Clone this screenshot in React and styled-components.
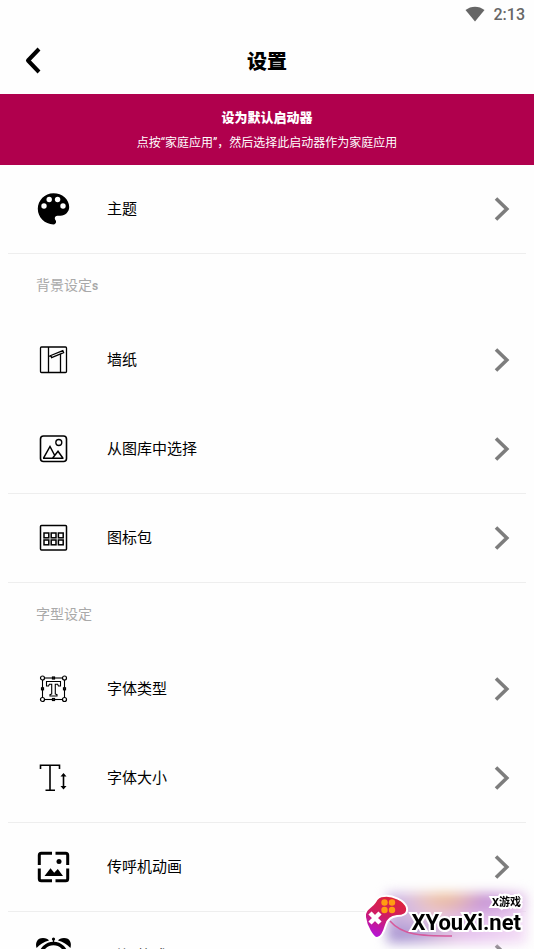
import React from 'react';
import styled, { createGlobalStyle } from 'styled-components';

const GlobalStyle = createGlobalStyle`
	* {
		box-sizing: border-box;
	}

	body {
		margin: 0;
		background: #fefefe;
		color: #000;
		font-family: Roboto, 'Noto Sans CJK SC', sans-serif;
	}
`;

const Screen = styled.div`
	display: flex;
	flex-direction: column;
	height: 100vh;
	overflow: hidden;
`;

const StatusBar = styled.div`
	display: flex;
	flex: none;
	align-items: center;
	justify-content: flex-end;
	gap: 8px;
	height: 28px;
	padding: 0 9px;
	color: #666;
	font-size: 16px;
	font-weight: 500;
	line-height: 28px;

	svg {
		margin-right: 1px;
	}

	span {
		padding-top: 2px;
	}
`;

const Header = styled.header`
	display: grid;
	flex: none;
	grid-template-columns: 48px 1fr 48px;
	align-items: center;
	height: 66px;
	padding: 0 10px;

	h1 {
		margin: 0;
		padding-top: 2px;
		font-size: 20px;
		font-weight: 900;
		line-height: 28px;
		text-align: center;
	}
`;

const BackButton = styled.button`
	display: flex;
	align-items: center;
	justify-content: center;
	height: 48px;
	padding: 0;
	border: 0;
	background: none;
	color: #000;
`;

const Banner = styled.button`
	display: flex;
	flex: none;
	flex-direction: column;
	align-items: center;
	justify-content: flex-start;
	gap: 5px;
	width: 100%;
	height: 71px;
	padding: 14px 16px 12px;
	border: 0;
	background: #b0004d;
	color: #fff;
	font-family: inherit;
	font-size: 12px;
	line-height: 20px;

	strong {
		font-size: 13px;
		font-weight: 900;
	}
`;

const List = styled.main`
	flex: 1;
	min-height: 0;
	padding: 0 8px;
	overflow-y: auto;
	scrollbar-width: none;
`;

const SectionTitle = styled.h2`
	height: 62px;
	margin: 0;
	padding: 0 28px;
	color: #a9a9a9;
	font-size: 14px;
	font-weight: 400;
	line-height: 62px;

	b {
		font-size: 12px;
	}
`;

const Row = styled.button`
	display: grid;
	grid-template-columns: 34px 1fr 16px;
	align-items: center;
	column-gap: 37px;
	width: 100%;
	height: 89px;
	padding: 0 16px 0 28px;
	border: 0;
	border-bottom: 1px solid ${(props) => (props.$divider ? '#eee' : 'transparent')};
	background: none;
	color: #000;
	font-family: inherit;
	font-size: 15px;
	line-height: 24px;
	text-align: left;

	svg {
		overflow: visible;
	}
`;

const Watermark = styled.div`
	position: fixed;
	right: 8px;
	bottom: 4px;
	display: flex;
	align-items: center;
	justify-content: space-between;
	width: 163px;
	height: 56px;
`;

const Glow = styled.div`
	position: absolute;
	inset: 4px 0 2px 24px;
	background:
		radial-gradient(ellipse at 42% 0, #eebd8c, transparent 35%),
		radial-gradient(ellipse at 70% 10%, #c08ad0, transparent 40%),
		radial-gradient(ellipse at 10% 90%, #a593d0, transparent 35%),
		linear-gradient(90deg, #c9b3e0, #e8c6e0 35%, #e6c4ee 60%, #f3dcf5);
	filter: blur(6px);
`;

const Gamepad = styled.svg`
	position: relative;
	flex: none;
	overflow: visible;
`;

const WatermarkText = styled.div`
	position: relative;
	display: flex;
	flex-direction: column;
	align-items: flex-end;
	padding: 0 5px 4px 0;
	font-weight: 700;
	white-space: nowrap;
	paint-order: stroke fill;
	-webkit-text-stroke: 4px #fff;

	small {
		font-size: 11px;
		line-height: 16px;
	}

	span {
		font-size: 22px;
		line-height: 24px;
	}
`;

const WifiIcon = () => (
	<svg width="20" height="16" viewBox="0 0 20 16">
		<path d="M10 15.5 0.5 4C6 -0.5 14 -0.5 19.5 4Z" fill="currentColor" />
	</svg>
);

const BackIcon = () => (
	<svg width="20" height="28" viewBox="0 0 20 28" fill="none" stroke="currentColor" strokeWidth="4">
		<path d="M15 2 4 13.5l11 11.5" strokeLinejoin="round" />
	</svg>
);

const ChevronIcon = () => (
	<svg width="16" height="24" viewBox="0 0 16 24" fill="none" stroke="#7d7d7d" strokeWidth="3.6">
		<path d="M2 1.5 12.8 12 2 22.5" />
	</svg>
);

const RowIcon = ({ children }) => (
	<svg width="34" height="34" viewBox="0 0 34 34" fill="none" stroke="currentColor" strokeWidth="1.3">
		{children}
	</svg>
);

const PaletteIcon = () => (
	<RowIcon>
		<path
			d="M17.5 1.2C8.8 1.2 1.8 8.2 1.8 16.8s7 15.6 15.7 15.6c1.5 0 2.6-1.1 2.6-2.6 0-.7-.3-1.3-.7-1.8-.4-.4-.6-1-.6-1.7 0-1.5 1.1-2.6 2.6-2.6h3.1c4.8 0 8.7-3.9 8.7-8.7C33.2 7.4 26.2 1.2 17.5 1.2Z"
			fill="#000"
			stroke="none"
		/>
		<g fill="#fff" stroke="none">
			<circle cx="8" cy="14" r="2.7" />
			<circle cx="13.2" cy="7.5" r="2.7" />
			<circle cx="21.6" cy="7.5" r="2.7" />
			<circle cx="27" cy="14" r="2.7" />
		</g>
	</RowIcon>
);

const WallpaperIcon = () => (
	<RowIcon>
		<rect x="4.5" y="4" width="26" height="25.5" rx="1" />
		<path d="M12.5 4v25.5M24.5 11v18.5" />
		<path d="M12.5 13.2h3M14.8 12.5l12-4.8.8 2-12 4.9Z" />
	</RowIcon>
);

const GalleryIcon = () => (
	<RowIcon>
		<rect x="4.5" y="4" width="26" height="25.5" rx="3" strokeWidth="1.6" />
		<circle cx="22.8" cy="10.5" r="3" />
		<path d="M7.5 26.2 14 14.5l5 9.5M16.5 26.2l5.5-7 5 7M7 26.2h20.5" strokeWidth="1.5" />
	</RowIcon>
);

const IconPackIcon = () => (
	<RowIcon>
		<rect x="4.5" y="4.5" width="26" height="24.5" rx="1" strokeWidth="1.5" />
		{[12, 19].map((y) =>
			[8, 15.2, 22.4].map((x) => (
				<rect key={`${x}-${y}`} x={x} y={y} width="4.8" height="4.8" strokeWidth="1.5" />
			))
		)}
	</RowIcon>
);

const FontTypeIcon = () => (
	<RowIcon>
		<rect x="6.5" y="6" width="22" height="21.5" strokeWidth="1.1" />
		<path
			d="M10.5 9.5h14v4.5h-2l-.9-1.8h-2.3v9.8l1.7.7v1.3h-7v-1.3l1.7-.7v-9.8h-2.3l-.9 1.8h-2Z"
			strokeWidth="1.1"
		/>
		<g fill="#fff" strokeWidth="1.2">
			<circle cx="6.5" cy="6" r="2" />
			<circle cx="28.5" cy="6" r="2" />
			<circle cx="6.5" cy="27.5" r="2" />
			<circle cx="28.5" cy="27.5" r="2" />
			<rect x="16.5" y="5" width="2" height="2" />
			<rect x="16.5" y="26.5" width="2" height="2" />
			<rect x="5.5" y="15.8" width="2" height="2" />
			<rect x="27.5" y="15.8" width="2" height="2" />
		</g>
	</RowIcon>
);

const FontSizeIcon = () => (
	<RowIcon>
		<path d="M4.5 8V4.3h19V8M14 4.3v25M9.5 29.3H19" strokeWidth="1.6" />
		<path d="M27.5 14v12.5" strokeWidth="1.6" />
		<path d="m24.5 15.5 3-3.6 3 3.6ZM24.5 25l3 3.6 3-3.6Z" fill="#000" stroke="none" />
	</RowIcon>
);

const PagerIcon = () => (
	<RowIcon>
		<path
			d="M3.3 15V5.3a2 2 0 0 1 2-2H16M19.5 3.3h10.2a2 2 0 0 1 2 2V15M31.7 18.5v10.2a2 2 0 0 1-2 2H19.5M16 30.7H5.3a2 2 0 0 1-2-2V18.5"
			strokeWidth="3"
		/>
		<path d="m8.5 26 6-7.8 3.7 4.6 3.6-3.7 5.2 6.9Z" fill="#000" stroke="none" />
		<circle cx="23" cy="11.5" r="2.5" fill="#000" stroke="none" />
	</RowIcon>
);

const AlarmIcon = () => (
	<RowIcon>
		<path
			d="M.6 9C-1 4 1-1 7-1c3 0 5 1 6 2.500C7.500 3 4 5.500.600 9ZM34.400 9C36 4 34-1 28-1c-3 0-5 1-6 2.500C27.500 3 31 5.500 34.400 9Z"
			fill="#000"
			stroke="none"
		/>
		<circle cx="17.5" cy="17.5" r="13" strokeWidth="3.5" />
		<path d="M17.5 10v8l5 3" strokeWidth="2" />
		<circle cx="17.5" cy="0" r="1.6" fill="#000" stroke="none" />
		<path d="M17.5 0v5" />
	</RowIcon>
);

const SettingRow = ({ icon: Icon, label, divider }) => (
	<Row type="button" $divider={divider}>
		<Icon />
		<span>{label}</span>
		<ChevronIcon />
	</Row>
);

const App = () => {
	return (
		<Screen>
			<GlobalStyle />
			<StatusBar>
				<WifiIcon />
				<span>2:13</span>
			</StatusBar>
			<Header>
				<BackButton type="button" aria-label="返回">
					<BackIcon />
				</BackButton>
				<h1>设置</h1>
			</Header>
			<Banner type="button">
				<strong>设为默认启动器</strong>
				<span>点按“家庭应用”，然后选择此启动器作为家庭应用</span>
			</Banner>
			<List>
				<SettingRow icon={PaletteIcon} label="主题" divider />
				<SectionTitle>
					背景设定<b>s</b>
				</SectionTitle>
				<SettingRow icon={WallpaperIcon} label="墙纸" />
				<SettingRow icon={GalleryIcon} label="从图库中选择" divider />
				<SettingRow icon={IconPackIcon} label="图标包" divider />
				<SectionTitle>字型设定</SectionTitle>
				<SettingRow icon={FontTypeIcon} label="字体类型" />
				<SettingRow icon={FontSizeIcon} label="字体大小" divider />
				<SettingRow icon={PagerIcon} label="传呼机动画" divider />
				<SettingRow icon={AlarmIcon} label="时间格式" divider />
			</List>
			<Watermark>
				<Glow />
				<Gamepad width="46" height="46" viewBox="0 0 46 46">
					<defs>
						<linearGradient id="pad" x1="0.7" y1="0" x2="0.3" y2="1">
							<stop offset="0" stopColor="#df2438" />
							<stop offset="0.5" stopColor="#d01d63" />
							<stop offset="1" stopColor="#b414dc" />
						</linearGradient>
					</defs>
					<path d="M27 27c12 14 30 15 62 15" fill="none" stroke="#d65a9c" strokeWidth="1.5" />
					<path
						d="M21 2C29 1 42 6 44 14c1 6-4 8-10 8-6 1-9 3-11 9-2 7-5 13-9 13S3 32 2 23C1 15 9 13 12 8c2-4 5-6 9-6Z"
						fill="url(#pad)"
						stroke="#fff"
						strokeWidth="2"
					/>
					<path d="m7 19 10 10M17 19 7 29" stroke="#fff" strokeWidth="4.5" />
					<g fill="#ff9c12">
						<circle cx="21.5" cy="8.5" r="3.2" />
						<circle cx="29" cy="8.5" r="3.2" />
						<circle cx="21.5" cy="16" r="3.2" />
						<circle cx="29" cy="16" r="3.2" />
					</g>
				</Gamepad>
				<WatermarkText>
					<small>X游戏</small>
					<span>XYouXi.net</span>
				</WatermarkText>
			</Watermark>
		</Screen>
	);
};

export default App;
